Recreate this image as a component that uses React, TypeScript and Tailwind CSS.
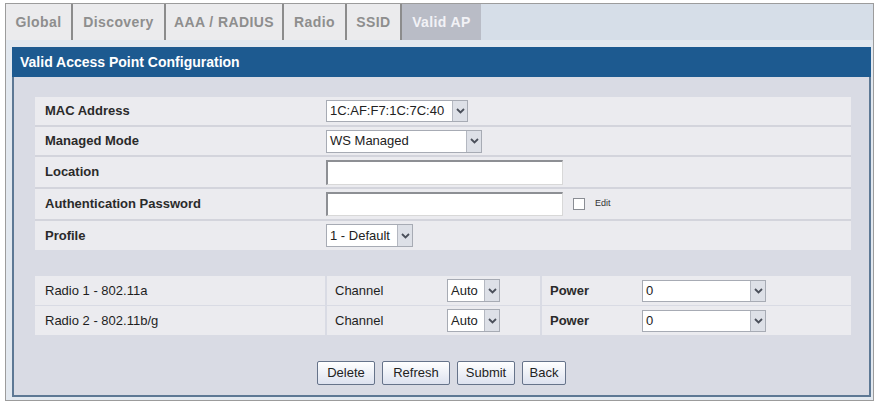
import React from "react";

const tabs = [
  { label: "Global", w: "w-[67px]" },
  { label: "Discovery", w: "w-[93px]" },
  { label: "AAA / RADIUS", w: "w-[118px]" },
  { label: "Radio", w: "w-[63px]" },
  { label: "SSID", w: "w-[55px]" },
];

function Chevron() {
  return (
    <svg width="9" height="6" viewBox="0 0 9 6">
      <path d="M1 1 L4.5 4.5 L8 1" fill="none" stroke="#4a4f5a" strokeWidth="1.8" />
    </svg>
  );
}

function Select({ value, className }: { value: string; className: string }) {
  return (
    <div className={`flex items-stretch border border-[#a7abb4] bg-white ${className}`}>
      <div className="flex flex-1 items-center pl-[3px] text-[13px] text-[#222]">{value}</div>
      <div className="flex w-[15px] items-center justify-center border-l border-[#b4b8c1] bg-[#dde0e7]">
        <Chevron />
      </div>
    </div>
  );
}

function TextBox({ className }: { className: string }) {
  return <div className={`border-l-2 border-t-2 border-r border-b border-[#8d8f94] border-r-[#d8d8d8] border-b-[#d8d8d8] bg-white ${className}`} />;
}

function FormRow({ label, h, children, last }: { label: string; h: string; children: React.ReactNode; last?: boolean }) {
  return (
    <div className={`flex items-center bg-[#ebebef] ${h} ${last ? "" : "border-b-2 border-[#d3d4dc]"}`}>
      <div className="w-[291px] pl-[10px] text-[13px] font-bold text-[#2a2a2a]">{label}</div>
      <div className="flex items-center">{children}</div>
    </div>
  );
}

function RadioRow({ label }: { label: string }) {
  return (
    <div className="flex h-[29px] gap-[2px]">
      <div className="flex w-[290px] items-center bg-[#ebebef] pl-[10px] text-[13px] text-[#1e1e1e]">{label}</div>
      <div className="flex w-[213px] items-center bg-[#ebebef] pl-[8px]">
        <span className="w-[112px] text-[13px] text-[#1e1e1e]">Channel</span>
        <Select value="Auto" className="h-[23px] w-[53px]" />
      </div>
      <div className="flex flex-1 items-center bg-[#ebebef] pl-[8px]">
        <span className="w-[92px] text-[13px] font-bold text-[#2a2a2a]">Power</span>
        <Select value="0" className="h-[22px] w-[124px]" />
      </div>
    </div>
  );
}

function Button({ label, w }: { label: string; w: string }) {
  return (
    <div className={`flex h-[24px] items-center justify-center rounded-[2px] border border-[#66738a] bg-gradient-to-b from-[#ffffff] to-[#dde2ef] text-[13px] text-[#222] ${w}`}>
      {label}
    </div>
  );
}

export default function App() {
  return (
    <div className="h-[404px] w-[879px] bg-white pl-[5px] pr-[5px] pt-[3px] font-['Liberation_Sans',Arial,sans-serif]">
      <div className="flex h-[398px] flex-col border border-[#9c9c9c] bg-[#e2e8ef]">
        <div className="flex h-[36px] bg-[#d6dee8]">
          {tabs.map((t) => (
            <div
              key={t.label}
              className={`flex items-center justify-center border-r-2 border-[#8c8c8c] bg-[#ebebed] text-[14px] font-bold tracking-[0.4px] text-[#8e8e8e] ${t.w}`}
            >
              {t.label}
            </div>
          ))}
          <div className="flex w-[79px] items-center justify-center bg-[#b9bcc6] text-[14px] font-bold tracking-[0.4px] text-[#f2f2f6]">
            Valid AP
          </div>
        </div>
        <div className="ml-[6px] mr-[2px] mt-[7px] flex flex-1 flex-col pb-[3px]">
          <div className="flex h-[30px] items-center bg-[#1d5a90] pl-[8px] text-[14px] font-bold text-white">
            Valid Access Point Configuration
          </div>
          <div className="flex flex-1 flex-col border-x-2 border-b-2 border-[#5d7894] bg-[#d9dbe4] pl-[21px] pr-[18px] pt-[20px]">
            <div className="flex flex-col">
              <FormRow label="MAC Address" h="h-[30px]">
                <Select value="1C:AF:F7:1C:7C:40" className="h-[22px] w-[142px]" />
              </FormRow>
              <FormRow label="Managed Mode" h="h-[30px]">
                <Select value="WS Managed" className="h-[23px] w-[156px]" />
              </FormRow>
              <FormRow label="Location" h="h-[32px]">
                <TextBox className="h-[25px] w-[237px]" />
              </FormRow>
              <FormRow label="Authentication Password" h="h-[32px]">
                <TextBox className="h-[24px] w-[237px]" />
                <div className="ml-[10px] h-[12px] w-[12px] border border-[#8a8d94] bg-white" />
                <span className="ml-[10px] text-[9px] text-[#333]">Edit</span>
              </FormRow>
              <FormRow label="Profile" h="h-[29px]" last>
                <Select value="1 - Default" className="h-[23px] w-[87px]" />
              </FormRow>
            </div>
            <div className="mt-[26px] flex flex-col gap-[1px]">
              <RadioRow label="Radio 1 - 802.11a" />
              <RadioRow label="Radio 2 - 802.11b/g" />
            </div>
            <div className="mt-[26px] flex justify-center gap-[7px] pr-[3px]">
              <Button label="Delete" w="w-[58px]" />
              <Button label="Refresh" w="w-[68px]" />
              <Button label="Submit" w="w-[58px]" />
              <Button label="Back" w="w-[44px]" />
            </div>
          </div>
        </div>
      </div>
    </div>
  );
}
